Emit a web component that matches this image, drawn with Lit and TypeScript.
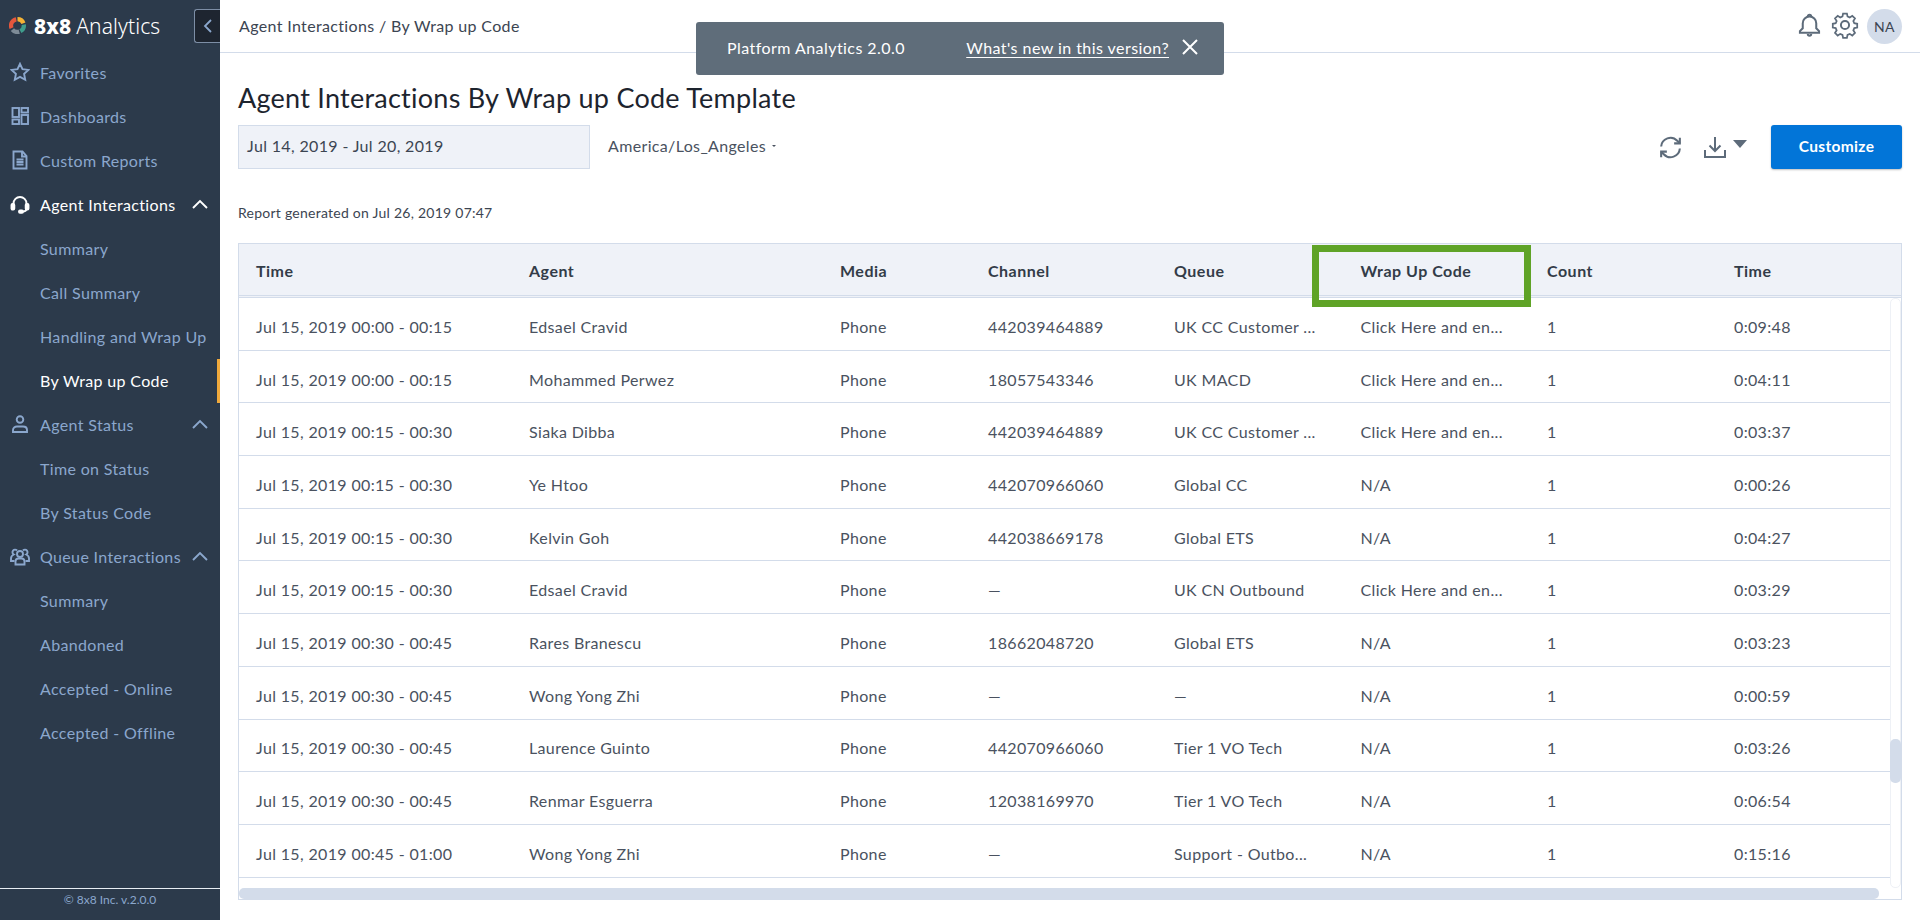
import { LitElement, html, css, svg } from 'lit';
import { customElement } from 'lit/decorators.js';

type NavItem = { label: string; icon?: string; open?: boolean; active?: boolean; current?: boolean };

const ICONS: Record<string, unknown> = {
  star: svg`<path d="M10 1.800l2.500 5.400 5.900.7-4.300 4 1.100 5.900-5.200-2.900-5.200 2.900 1.100-5.900-4.300-4 5.900-.7z"/>`,
  grid: svg`<rect x="2.500" y="2" width="6.500" height="9"/><rect x="2.500" y="13.500" width="6.500" height="4.500"/><rect x="11.500" y="2" width="6.500" height="4.500"/><rect x="11.500" y="9" width="6.500" height="9"/>`,
  doc: svg`<path d="M3.500 1.500h9l4 4.500v12.500h-13z"/><path d="M12 1.500V6.500h4.500M6.500 9.500h7M6.500 12h7M6.500 14.500h7"/>`,
  headset: svg`<path d="M3.500 13V9.500a6.500 6.500 0 0 1 13 0V13"/><path d="M16.500 14.500c0 2-1.600 3-4 3"/><rect x="1.500" y="10" width="2.800" height="5.500" rx="1" fill="currentColor"/><rect x="15.700" y="10" width="2.800" height="5.500" rx="1" fill="currentColor"/><rect x="9" y="16.400" width="4" height="2.400" rx="1" fill="currentColor"/>`,
  person: svg`<circle cx="10" cy="5.500" r="3.300"/><path d="M3 18v-2c0-2.200 1.800-3.500 4-3.500h6c2.200 0 4 1.300 4 3.500v2z"/>`,
  group: svg`<circle cx="10" cy="8" r="3"/><path d="M5.500 18.500v-3c0-1.800 1.400-3 3-3h3c1.600 0 3 1.200 3 3v3z"/><path d="M7 4.500A2.600 2.600 0 1 0 3.800 8.500C2.300 9.200 1 10.500 1 12.500v2.500h3.500M13 4.500a2.600 2.600 0 1 1 3.200 4c1.500.7 2.800 2 2.800 4v2.500h-3.500"/>`,
};

const NAV: NavItem[] = [
  { label: 'Favorites', icon: 'star' },
  { label: 'Dashboards', icon: 'grid' },
  { label: 'Custom Reports', icon: 'doc' },
  { label: 'Agent Interactions', icon: 'headset', open: true, active: true },
  { label: 'Summary' },
  { label: 'Call Summary' },
  { label: 'Handling and Wrap Up' },
  { label: 'By Wrap up Code', active: true, current: true },
  { label: 'Agent Status', icon: 'person', open: true },
  { label: 'Time on Status' },
  { label: 'By Status Code' },
  { label: 'Queue Interactions', icon: 'group', open: true },
  { label: 'Summary' },
  { label: 'Abandoned' },
  { label: 'Accepted - Online' },
  { label: 'Accepted - Offline' },
];

const COLUMNS = ['Time', 'Agent', 'Media', 'Channel', 'Queue', 'Wrap Up Code', 'Count', 'Time'];

const CLICK = 'Click Here and en...';
const ROWS: string[][] = [
  ['Jul 15, 2019 00:00 - 00:15', 'Edsael Cravid', 'Phone', '442039464889', 'UK CC Customer ...', CLICK, '1', '0:09:48'],
  ['Jul 15, 2019 00:00 - 00:15', 'Mohammed Perwez', 'Phone', '18057543346', 'UK MACD', CLICK, '1', '0:04:11'],
  ['Jul 15, 2019 00:15 - 00:30', 'Siaka Dibba', 'Phone', '442039464889', 'UK CC Customer ...', CLICK, '1', '0:03:37'],
  ['Jul 15, 2019 00:15 - 00:30', 'Ye Htoo', 'Phone', '442070966060', 'Global CC', 'N/A', '1', '0:00:26'],
  ['Jul 15, 2019 00:15 - 00:30', 'Kelvin Goh', 'Phone', '442038669178', 'Global ETS', 'N/A', '1', '0:04:27'],
  ['Jul 15, 2019 00:15 - 00:30', 'Edsael Cravid', 'Phone', '—', 'UK CN Outbound', CLICK, '1', '0:03:29'],
  ['Jul 15, 2019 00:30 - 00:45', 'Rares Branescu', 'Phone', '18662048720', 'Global ETS', 'N/A', '1', '0:03:23'],
  ['Jul 15, 2019 00:30 - 00:45', 'Wong Yong Zhi', 'Phone', '—', '—', 'N/A', '1', '0:00:59'],
  ['Jul 15, 2019 00:30 - 00:45', 'Laurence Guinto', 'Phone', '442070966060', 'Tier 1 VO Tech', 'N/A', '1', '0:03:26'],
  ['Jul 15, 2019 00:30 - 00:45', 'Renmar Esguerra', 'Phone', '12038169970', 'Tier 1 VO Tech', 'N/A', '1', '0:06:54'],
  ['Jul 15, 2019 00:45 - 01:00', 'Wong Yong Zhi', 'Phone', '—', 'Support - Outbo...', 'N/A', '1', '0:15:16'],
];

@customElement('app-root')
export class AppRoot extends LitElement {
  static override styles = css`
    :host {
      display: grid;
      grid-template-columns: 220px 1fr;
      width: 1920px;
      height: 920px;
      overflow: hidden;
      position: relative;
      background: #fff;
      font-family: 'Lato', 'Noto Sans', sans-serif;
      font-size: 16px;
      letter-spacing: 0.35px;
      color: #4a5260;
    }
    .side {
      background: #2c3a4b;
      color: #8ba7cd;
      display: flex;
      flex-direction: column;
      position: relative;
    }
    .brand {
      height: 51px;
      display: flex;
      align-items: center;
      padding-left: 9px;
      color: #fff;
      font-size: 21px;
      letter-spacing: 0.1px;
      font-family: 'Noto Sans', sans-serif;
    }
    .brand svg {
      width: 17px;
      height: 17px;
      margin-right: 8px;
    }
    .brand b {
      font-weight: 800;
      margin-right: 5px;
    }
    .brand span {
      font-weight: 300;
    }
    .collapse {
      position: absolute;
      left: 194px;
      top: 9px;
      width: 26px;
      height: 34px;
      box-sizing: border-box;
      background: #1e2530;
      border: 1px solid #7d8ea6;
      border-right: none;
      border-radius: 3px 0 0 3px;
      display: flex;
      align-items: center;
      justify-content: center;
    }
    .nav {
      flex: 1;
      display: flex;
      flex-direction: column;
    }
    .item {
      height: 44px;
      box-sizing: border-box;
      padding: 0 0 2px 40px;
      display: flex;
      align-items: center;
      position: relative;
      white-space: nowrap;
    }
    .item.active {
      color: #fff;
    }
    .item.current {
      border-right: 3px solid #f0a93c;
    }
    .item .ico {
      position: absolute;
      left: 10px;
      top: 11px;
      width: 20px;
      height: 20px;
      fill: none;
      stroke: currentColor;
      stroke-width: 1.9;
    }
    .item .chev {
      position: absolute;
      left: 192px;
      top: 16px;
      width: 16px;
      height: 10px;
      fill: none;
      stroke: currentColor;
      stroke-width: 1.9;
    }
    .foot {
      height: 32px;
      box-sizing: border-box;
      border-top: 1px solid #e8edf3;
      text-align: center;
      font-size: 12px;
      letter-spacing: 0;
      line-height: 21px;
    }
    .main {
      display: flex;
      flex-direction: column;
      min-width: 0;
    }
    .top {
      height: 53px;
      box-sizing: border-box;
      border-bottom: 1px solid #d3dcea;
      display: flex;
      align-items: center;
      padding: 0 18px 0 19px;
      color: #3c4552;
    }
    .crumb {
      flex: 1;
      padding-bottom: 1px;
    }
    .top svg {
      fill: none;
      stroke: #5d6b7a;
      stroke-width: 1.8;
      margin-top: -2px;
    }
    .bell {
      width: 27px;
      height: 27px;
      margin-right: 8px;
    }
    .gear {
      width: 28px;
      height: 28px;
      margin-right: 8px;
    }
    .avatar {
      width: 35px;
      height: 35px;
      border-radius: 50%;
      background: #d3dcea;
      display: flex;
      align-items: center;
      justify-content: center;
      font-size: 14px;
      color: #3c4552;
    }
    .toast {
      position: absolute;
      left: 696px;
      top: 22px;
      width: 528px;
      height: 53px;
      box-sizing: border-box;
      background: #5f6d7a;
      border-radius: 3px;
      color: #fff;
      display: flex;
      align-items: center;
      padding: 0 25px 3px 31px;
      letter-spacing: 0.45px;
      white-space: nowrap;
    }
    .toast .name {
      flex: 1;
    }
    .toast a {
      text-decoration: underline;
      text-underline-offset: 3px;
      margin-right: 12px;
    }
    .toast svg {
      width: 18px;
      height: 18px;
      stroke: #fff;
      stroke-width: 2;
    }
    .content {
      flex: 1;
      display: flex;
      flex-direction: column;
      padding: 0 18px 20px;
      min-height: 0;
    }
    h1 {
      margin: 27px 0 0;
      font-size: 27px;
      font-weight: 400;
      line-height: 35px;
      color: #1d242e;
      letter-spacing: 0.25px;
    }
    .filters {
      display: flex;
      align-items: center;
      margin-top: 10px;
      height: 44px;
    }
    .date {
      width: 352px;
      height: 44px;
      box-sizing: border-box;
      background: #eff2f8;
      border: 1px solid #d3dcea;
      display: flex;
      align-items: center;
      padding: 0 0 3px 8px;
      color: #3c4552;
    }
    .tz {
      margin-left: 18px;
      padding-bottom: 3px;
      display: flex;
      align-items: center;
      flex: 1;
    }
    .tz i {
      margin-left: 6px;
      border: 2.5px solid transparent;
      border-top-color: #4a5260;
      margin-top: 3px;
    }
    .filters svg {
      fill: none;
      stroke: #5d6b7a;
      stroke-width: 2;
    }
    .refresh {
      width: 27px;
      height: 27px;
      margin-right: 18px;
    }
    .download {
      width: 26px;
      height: 26px;
      margin-right: 5px;
    }
    .caret {
      width: 0;
      height: 0;
      border: 7px solid transparent;
      border-top: 8px solid #5d6b7a;
      border-bottom: none;
      margin-right: 24px;
      margin-top: -6px;
    }
    .customize {
      width: 131px;
      height: 44px;
      box-sizing: border-box;
      padding-bottom: 2px;
      background: #0275d8;
      color: #fff;
      border-radius: 3px;
      display: flex;
      align-items: center;
      justify-content: center;
      font-weight: 700;
      font-size: 15.500px;
      box-shadow: 0 1px 2px rgba(0, 0, 0, 0.25);
    }
    .generated {
      margin-top: 35px;
      font-size: 14px;
      letter-spacing: 0.25px;
      line-height: 18px;
      color: #3c4552;
    }
    .table {
      margin-top: 21px;
      flex: 1;
      min-height: 0;
      border: 1px solid #d3dcea;
      position: relative;
      display: flex;
      flex-direction: column;
    }
    .row {
      display: grid;
      grid-template-columns: 273px 311px 148px 186px 186.500px 186.500px 187px 1fr;
      align-items: center;
    }
    .head {
      height: 49px;
      padding-top: 2px;
      background: #eff2f8;
      border-bottom: 3px double #d3dcea;
      font-weight: 700;
      letter-spacing: 0.5px;
      color: #333c48;
      box-sizing: content-box;
    }
    .cell {
      padding-left: 17px;
      white-space: nowrap;
      overflow: hidden;
    }
    .body {
      flex: 1;
      display: flex;
      min-height: 0;
    }
    .rows {
      flex: 1;
      min-width: 0;
    }
    .rows .row {
      height: 52.700px;
      box-sizing: border-box;
      border-bottom: 1px solid #d3dcea;
      padding-top: 5px;
    }
    .vbar {
      width: 11px;
      border: 1px solid #eef1f6;
      border-radius: 5px;
      box-sizing: border-box;
      position: relative;
    }
    .vbar div {
      position: absolute;
      left: -1px;
      right: -1px;
      top: 440px;
      height: 44px;
      background: #d3dcea;
      border-radius: 5px;
    }
    .hbar {
      height: 11px;
      flex: none;
      background: #fff;
    }
    .hbar div {
      width: 1640px;
      height: 11px;
      background: #d3dcea;
      border-radius: 5px;
    }
    .mark {
      position: absolute;
      left: 1073px;
      top: 1px;
      width: 219px;
      height: 62px;
      box-sizing: border-box;
      border: 7px solid #5fa327;
    }
  `;

  override render() {
    return html`
      <aside class="side">
        <div class="brand">
          <svg viewBox="0 0 20 20" fill="none" stroke-width="5">
            <path d="M10 2.500a7.500 7.500 0 0 1 7 4.800" stroke="#f5b335"/>
            <path d="M17.400 9a7.500 7.500 0 0 1-4 7.700" stroke="#3f9d8c"/>
            <path d="M12 17.200a7.500 7.500 0 0 1-8-2.400" stroke="#7d8a96"/>
            <path d="M3 13a7.500 7.500 0 0 1 5.500-10.300" stroke="#e4573d"/>
          </svg>
          <b>8x8</b><span>Analytics</span>
        </div>
        <div class="collapse">
          <svg width="10" height="16" viewBox="0 0 10 16" fill="none" stroke="#8ba7cd" stroke-width="1.8"><path d="M8 2L2 8l6 6"/></svg>
        </div>
        <nav class="nav">
          ${NAV.map(
            (n) => html`<div class="item ${n.active ? 'active' : ''} ${n.current ? 'current' : ''}">
              ${n.icon ? html`<svg class="ico" viewBox="0 0 20 20">${ICONS[n.icon]}</svg>` : ''}
              ${n.label}
              ${n.open ? html`<svg class="chev" viewBox="0 0 16 10"><path d="M1 9l7-7 7 7"/></svg>` : ''}
            </div>`,
          )}
        </nav>
        <div class="foot">© 8x8 Inc. v.2.0.0</div>
      </aside>
      <div class="main">
        <header class="top">
          <div class="crumb">Agent Interactions / By Wrap up Code</div>
          <svg class="bell" viewBox="0 0 24 24">
            <path d="M3.500 18.500h17v-1.500l-2.500-2.500V10a6 6 0 0 0-12 0v4.500L3.500 17z"/>
            <path d="M10.500 4a1.500 1.500 0 0 1 3 0M10.500 19.500a1.500 1.500 0 0 0 3 0"/>
          </svg>
          <svg class="gear" viewBox="0 0 26 26">
            <circle cx="13" cy="13" r="3.800"/>
            <path d="M11 2.500h4l.6 3 2.300 1 2.600-1.700 2.800 2.800-1.700 2.600 1 2.300 3 .6v3.800l-3 .6-1 2.300 1.700 2.600-2.800 2.800-2.600-1.700-2.300 1-.6 3h-4l-.6-3-2.300-1-2.600 1.700-2.800-2.800 1.700-2.600-1-2.300-3-.6v-3.800l3-.6 1-2.300-1.700-2.600 2.800-2.800 2.600 1.700 2.300-1z" transform="translate(1.300 .1) scale(.9)"/>
          </svg>
          <div class="avatar">NA</div>
        </header>
        <div class="content">
          <h1>Agent Interactions By Wrap up Code Template</h1>
          <div class="filters">
            <div class="date">Jul 14, 2019 - Jul 20, 2019</div>
            <div class="tz">America/Los_Angeles<i></i></div>
            <svg class="refresh" viewBox="0 0 26 26">
              <path d="M4 12a9 9 0 0 1 15.500-5.500L22 9M22 14a9 9 0 0 1-15.500 5.500L4 17"/>
              <path d="M22 3.500V9h-5.500M4 22.500V17h5.500"/>
            </svg>
            <svg class="download" viewBox="0 0 26 26">
              <path d="M13 3v14M7.500 11.500L13 17l5.500-5.500M3 16v7h20v-7"/>
            </svg>
            <div class="caret"></div>
            <div class="customize">Customize</div>
          </div>
          <div class="generated">Report generated on Jul 26, 2019 07:47</div>
          <div class="table">
            <div class="row head">
              ${COLUMNS.map((c) => html`<div class="cell">${c}</div>`)}
            </div>
            <div class="body">
              <div class="rows">
                ${ROWS.map(
                  (r) => html`<div class="row">
                    ${r.map((c) => html`<div class="cell">${c}</div>`)}
                  </div>`,
                )}
              </div>
              <div class="vbar"><div></div></div>
            </div>
            <div class="hbar"><div></div></div>
            <div class="mark"></div>
          </div>
        </div>
      </div>
      <div class="toast">
        <span class="name">Platform Analytics 2.0.0</span>
        <a>What's new in this version?</a>
        <svg viewBox="0 0 18 18"><path d="M2 2l14 14M16 2L2 16"/></svg>
      </div>
    `;
  }
}
